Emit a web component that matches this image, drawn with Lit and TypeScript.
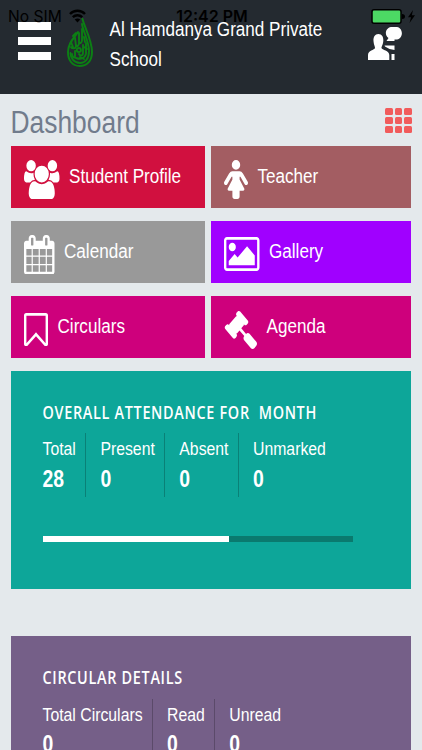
import { html, svg, css, LitElement } from 'lit';
import { customElement, property } from 'lit/decorators.js';
import { styleMap } from 'lit/directives/style-map.js';

// glyphs for the menu tiles, each with its own view box and drawn size
const ICONS: Record<string, { box: string; w: number; h: number; d: string }> = {
  users: {
    box: '0 0 1920 1792', w: 35.5, h: 39.5,
    d: 'M593 896q-162 5-265 128h-134q-82 0-138-40.5t-56-118.5q0-353 124-353 6 0 43.5 21t97.5 42.5 119 21.5q67 0 133-23-5 37-5 66 0 139 81 256zm1071 637q0 120-73 189.5t-194 69.5h-874q-121 0-194-69.5t-73-189.5q0-53 3.5-103.5t14-109 26.5-108.5 43-97.5 62-81 85.5-53.5 111.5-20q10 0 43 21.5t73 48 107 48 135 21.5 135-21.5 107-48 73-48 43-21.5q61 0 111.5 20t85.5 53.5 62 81 43 97.5 26.5 108.5 14 109 3.5 103.5zm-1024-1277q0 106-75 181t-181 75-181-75-75-181 75-181 181-75 181 75 75 181zm704 384q0 159-112.5 271.5t-271.5 112.5-271.5-112.5-112.5-271.5 112.5-271.5 271.5-112.5 271.5 112.5 112.5 271.5zm576 225q0 78-56 118.5t-138 40.5h-134q-103-123-265-128 81-117 81-256 0-29-5-66 66 23 133 23 59 0 119-21.5t97.5-42.5 43.5-21q124 0 124 353zm-128-609q0 106-75 181t-181 75-181-75-75-181 75-181 181-75 181 75 75 181z',
  },
  female: {
    box: '0 0 1280 1792', w: 24, h: 39,
    d: 'M1280 1056q0 40-28 68t-68 28q-51 0-80-43l-227-341h-45v132l247 411q9 15 9 33 0 26-19 45t-45 19h-192v272q0 46-33 79t-79 33h-160q-46 0-79-33t-33-79v-272h-192q-26 0-45-19t-19-45q0-18 9-33l247-411v-132h-45l-227 341q-29 43-80 43-40 0-68-28t-28-68q0-29 16-53l256-384q73-107 176-107h384q103 0 176 107l256 384q16 24 16 53zm-416-832q0 93-65.5 158.5t-158.5 65.5-158.5-65.5-65.5-158.5 65.5-158.5 158.5-65.5 158.5 65.5 65.5 158.5z',
  },
  calendar: {
    box: '0 0 1664 1792', w: 30.5, h: 39.5,
    d: 'M128 1664h288v-288h-288v288zm352 0h320v-288h-320v288zm-352-352h288v-320h-288v320zm352 0h320v-320h-320v320zm-352-384h288v-288h-288v288zm736 736h320v-288h-320v288zm-384-736h320v-288h-320v288zm768 736h288v-288h-288v288zm-384-352h320v-320h-320v320zm-352-864v-288q0-13-9.5-22.5t-22.5-9.5h-64q-13 0-22.5 9.5t-9.5 22.5v288q0 13 9.5 22.5t22.5 9.5h64q13 0 22.5-9.5t9.5-22.5zm736 864h288v-320h-288v320zm-384-384h320v-288h-320v288zm384 0h288v-288h-288v288zm32-480v-288q0-13-9.5-22.5t-22.5-9.5h-64q-13 0-22.5 9.5t-9.5 22.5v288q0 13 9.5 22.5t22.5 9.5h64q13 0 22.5-9.5t9.5-22.5zm384-64v1280q0 52-38 90t-90 38h-1408q-52 0-90-38t-38-90v-1280q0-52 38-90t90-38h128v-96q0-66 47-113t113-47h64q66 0 113 47t47 113v96h384v-96q0-66 47-113t113-47h64q66 0 113 47t47 113v96h128q52 0 90 38t38 90z',
  },
  picture: {
    box: '0 0 1920 1536', w: 35.5, h: 34,
    d: 'M640 448q0 80-56 136t-136 56-136-56-56-136 56-136 136-56 136 56 56 136zm1024 384v448h-1408v-192l320-320 160 160 512-512zm96-704h-1600q-13 0-22.5 9.5t-9.5 22.5v1216q0 13 9.5 22.5t22.5 9.5h1600q13 0 22.5-9.5t9.5-22.5v-1216q0-13-9.5-22.5t-22.5-9.5zm160 32v1216q0 66-47 113t-113 47h-1600q-66 0-113-47t-47-113v-1216q0-66 47-113t113-47h1600q66 0 113 47t47 113z',
  },
  bookmark: {
    box: '0 0 1280 1520', w: 24, h: 33.5,
    d: 'M1152 128h-1024v1242l423-406 89-85 89 85 423 406v-1242zm12-128q23 0 44 9 33 13 52.5 41t19.5 62v1289q0 34-19.5 62t-52.5 41q-19 8-44 8-48 0-83-32l-441-424-441 424q-36 33-83 33-23 0-44-9-33-13-52.5-41t-19.5-62v-1289q0-34 19.5-62t52.5-41q21-9 44-9h1048z',
  },
  gavel: {
    box: '0 0 1771 1771', w: 33, h: 39,
    d: 'M1771 1536q0 53-37 90l-107 108q-38 37-91 37-53 0-90-37l-363-364q-38-36-38-90 0-53 43-96l-256-256-126 126q-14 14-34 14t-34-14q2 2 12.5 12t12.5 13 10 11.5 10 13.5 6 13.5 5.5 16.5 1.5 18q0 38-28 68-3 3-16.5 18t-19 20.5-18.5 16.5-22 15.5-22 9-26 4.5q-40 0-68-28l-408-408q-28-28-28-68 0-13 4.5-26t9-22 15.5-22 16.5-18.5 20.5-19 18-16.5q30-28 68-28 10 0 18 1.5t16.5 5.5 13.5 6 13.5 10 11.5 10 13 12.5 12 12.5q-14-14-14-34t14-34l348-348q14-14 34-14t34 14q-2-2-12.5-12t-12.5-13-10-11.5-10-13.5-6-13.5-5.5-16.5-1.5-18q0-38 28-68 3-3 16.5-18t19-20.5 18.5-16.5 22-15.5 22-9 26-4.5q40 0 68 28l408 408q28 28 28 68 0 13-4.5 26t-9 22-15.5 22-16.5 18.5-20.5 19-18 16.5q-30 28-68 28-10 0-18-1.5t-16.5-5.5-13.5-6-13.5-10-11.5-10-13-12.5-12-12.5q14 14 14 34t-14 34l-126 126 256 256q43-43 96-43 52 0 91 37l363 363q37 39 37 91z',
  },
};

@customElement('menu-tile')
export class MenuTile extends LitElement {
  @property() icon = 'users';
  @property() label = '';

  static styles = css`
    :host {
      display: flex;
      align-items: center;
      gap: 9.5px;
      box-sizing: border-box;
      padding: 5px 0 0 13px;
      color: #fff;
    }
    svg {
      flex: none;
      fill: #fff;
    }
    .label {
      font-size: 17.1px;
      line-height: 20px;
      white-space: nowrap;
      padding-bottom: 4px;
      transform: scaleY(1.2);
    }
  `;

  render() {
    const icon = ICONS[this.icon];
    return html`
      <svg width="${icon.w}" height="${icon.h}" viewBox="${icon.box}" preserveAspectRatio="none"><path d="${icon.d}"></path></svg>
      <span class="label">${this.label}</span>
    `;
  }
}

@customElement('stat-panel')
export class StatPanel extends LitElement {
  @property() heading = '';
  @property({ attribute: false }) stats: [string, number][] = [];
  @property({ type: Number }) progress = 0;

  static styles = css`
    :host {
      display: block;
      box-sizing: border-box;
      height: 218.5px;
      padding: 32px 58px 0 31.5px;
      color: #fff;
    }
    .heading {
      margin: 0;
      font: 600 14.4px/20px 'Open Sans', sans-serif;
      letter-spacing: 0.7px;
      white-space: pre;
      transform: scaleY(1.19);
    }
    .stats {
      display: flex;
      margin-top: 10.5px;
    }
    .stat {
      height: 64px;
      padding: 0 9.5px 0 14px;
      border-left: 1px solid rgba(0, 0, 0, 0.22);
    }
    .stat:first-child {
      padding-left: 0;
      border-left: 0;
    }
    .name,
    .value {
      white-space: nowrap;
      transform: scaleY(1.2);
    }
    .name {
      font-size: 15.8px;
      line-height: 20px;
      padding-top: 4.6px;
    }
    .value {
      font-size: 19.4px;
      font-weight: bold;
      line-height: 24px;
      padding-top: 8.4px;
    }
    .track {
      height: 6px;
      margin-top: 38.5px;
      background: #0a7a6e;
    }
    .fill {
      height: 100%;
      background: #fff;
    }
  `;

  render() {
    return html`
      <h3 class="heading">${this.heading}</h3>
      <div class="stats">
        ${this.stats.map(([name, value]) => html`
          <div class="stat">
            <div class="name">${name}</div>
            <div class="value">${value}</div>
          </div>`
        )}
      </div>
      ${this.progress ? html`
        <div class="track"><div class="fill" style=${styleMap({ width: `${this.progress}%` })}></div></div>
      ` : ''}
    `;
  }
}

@customElement('app-root')
export class AppRoot extends LitElement {
  static styles = css`
    :host {
      display: block;
      position: relative;
      height: 750px;
      overflow: hidden;
      background: #e4e9ec;
      font-family: 'Liberation Sans', Arial, sans-serif;
    }
    .status {
      position: absolute;
      inset: 0 0 auto 0;
      display: grid;
      grid-template-columns: 1fr auto 1fr;
      align-items: center;
      height: 32px;
      padding: 0 6px 0 8px;
      font-family: Inter, sans-serif;
      font-size: 15.6px;
      color: #000;
    }
    .carrier,
    .power {
      display: flex;
      align-items: center;
      gap: 7px;
    }
    .power {
      justify-content: flex-end;
    }
    .clock {
      font-size: 16px;
      font-weight: 600;
    }
    header {
      display: flex;
      align-items: flex-start;
      box-sizing: border-box;
      height: 94px;
      padding: 18px 20px 0 18px;
      background: #242a30;
      color: #fff;
    }
    .burger {
      display: grid;
      gap: 7.5px;
      width: 32.5px;
      padding-top: 4px;
    }
    .burger i {
      height: 7.5px;
      background: #fff;
    }
    .logo {
      margin-left: 16.5px;
    }
    .school {
      flex: 1;
      margin: 1.5px 0 0 16.5px;
      font-size: 17.1px;
      font-weight: normal;
      line-height: 24.5px;
      transform: scaleY(1.2);
    }
    .chat {
      margin-top: 9px;
      fill: #fff;
    }
    .title {
      display: flex;
      justify-content: space-between;
      align-items: center;
      height: 51.5px;
      padding: 0 10.5px 0 10.5px;
      box-sizing: border-box;
    }
    h1 {
      margin: 4px 0 0;
      font-size: 26.4px;
      font-weight: normal;
      line-height: 30px;
      color: #717c8c;
      transform: scaleY(1.2);
    }
    .apps {
      display: grid;
      grid-template-columns: repeat(3, 7.4px);
      gap: 2px;
      margin-top: 2px;
    }
    .apps i {
      height: 7px;
      border-radius: 1.5px;
      background: #f15b5b;
    }
    .tiles {
      display: grid;
      grid-template-columns: 193.5px 200px;
      grid-auto-rows: 62.5px;
      gap: 12.5px 6.5px;
      padding: 0 11px;
    }
    .crimson { background: #d1103f; }
    .brick { background: #a35d62; }
    .grey { background: #999; }
    .violet { background: #a000ff; }
    .pink { background: #ce007c; }
    stat-panel {
      margin: 12.5px 11px 0;
    }
    stat-panel + stat-panel {
      margin-top: 47px;
    }
    .teal { background: #0da699; }
    .purple { background: #755f88; }
  `;

  renderLogo() {
    return svg`
      <g fill="none" stroke="#0c7f14" stroke-width="1.9" stroke-linecap="round">
        <path stroke-width="2" d="M15.500 1C17 8 25 22 25 34C25 43 20 48 12.500 48C5 48 1 42 1 34C1 25 7 20 11 14"></path>
        <path d="M15 6C16 13 22 24 22 33C22 41 18 45 13 45C7 45 3.500 40 3.500 35"></path>
        <path d="M4 24L6 29M8 20L9 28C9 31 5 31 4 29M12 15V25C12 28 10 29 9 27M15 11V22C15 25 13 26 12 24M6 18L9 15M17 19L18 24"></path>
        <path d="M19 25V36M16 27V35C16 38 13 38 12 36M12 30C9 30 9 34 12 34C15 34 14 30 12 30M8 33V38C8 41 5 39 5 36M19 36C18 40 14 42 9 40M13 39L17 41M17 29L20 31"></path>
      </g>`;
  }

  render() {
    return html`
      <header>
        <div class="burger"><i></i><i></i><i></i></div>
        <svg class="logo" width="26" height="49" viewBox="0 0 26 49">${this.renderLogo()}</svg>
        <h2 class="school">Al Hamdanya Grand Private<br>School</h2>
        <svg class="chat" width="34" height="33" viewBox="0 0 34 33">
          <path d="M10.300 7C14 7 15.600 10 15.300 14C15 18 13.500 19 13.500 21C14 23 21.300 23.500 21.300 28V33H0V28C0 23.500 6.500 23 7 21C7 19 5.800 18 5.500 14C5.200 10 7 7 10.300 7Z"></path>
          <path d="M23 0H29C35.500 1 35.500 11.500 29 12.500H26.500V14H18.500L20.500 11C16 8 17.500 1 23 0Z"></path>
          <path d="M16.500 18.500H26.500V23L21.500 22L17 19.500ZM23.500 27H26.500V33H23.500Z"></path>
        </svg>
      </header>

      <!-- system status bar sits on top of the app header -->
      <div class="status">
        <div class="carrier">
          <span>No SIM</span>
          <svg width="17" height="14" viewBox="0 0 17 14" fill="none" stroke="#000" stroke-width="2.400">
            <path d="M1 5C5 .6 12 .6 16 5M3.800 8.200C6.500 5.500 10.500 5.500 13.200 8.200"></path>
            <path d="M8.500 13.500L5.700 10.600Q8.500 8.400 11.300 10.600Z" fill="#000" stroke="none"></path>
          </svg>
        </div>
        <span class="clock">12:42 PM</span>
        <div class="power">
          <svg width="45" height="15" viewBox="0 0 45 15">
            <rect x="1" y=".8" width="29" height="13.400" rx="2" fill="#4cd964" stroke="#000" stroke-width="1.500"></rect>
            <path d="M31 5Q34 5 34 7.500T31 10Z"></path>
            <path d="M42 1L37 8.300H40L38.500 14L44 6.300H40.800Z"></path>
          </svg>
        </div>
      </div>

      <div class="title">
        <h1>Dashboard</h1>
        <div class="apps">${Array.from({ length: 9 }, () => html`<i></i>`)}</div>
      </div>

      <div class="tiles">
        <menu-tile class="crimson" icon="users" label="Student Profile"></menu-tile>
        <menu-tile class="brick" icon="female" label="Teacher"></menu-tile>
        <menu-tile class="grey" icon="calendar" label="Calendar"></menu-tile>
        <menu-tile class="violet" icon="picture" label="Gallery"></menu-tile>
        <menu-tile class="pink" icon="bookmark" label="Circulars"></menu-tile>
        <menu-tile class="pink" icon="gavel" label="Agenda"></menu-tile>
      </div>

      <stat-panel
        class="teal"
        heading="OVERALL ATTENDANCE FOR  MONTH"
        .stats=${[['Total', 28], ['Present', 0], ['Absent', 0], ['Unmarked', 0]]}
        progress="60"
      ></stat-panel>
      <stat-panel
        class="purple"
        heading="CIRCULAR DETAILS"
        .stats=${[['Total Circulars', 0], ['Read', 0], ['Unread', 0]]}
      ></stat-panel>
    `;
  }
}
